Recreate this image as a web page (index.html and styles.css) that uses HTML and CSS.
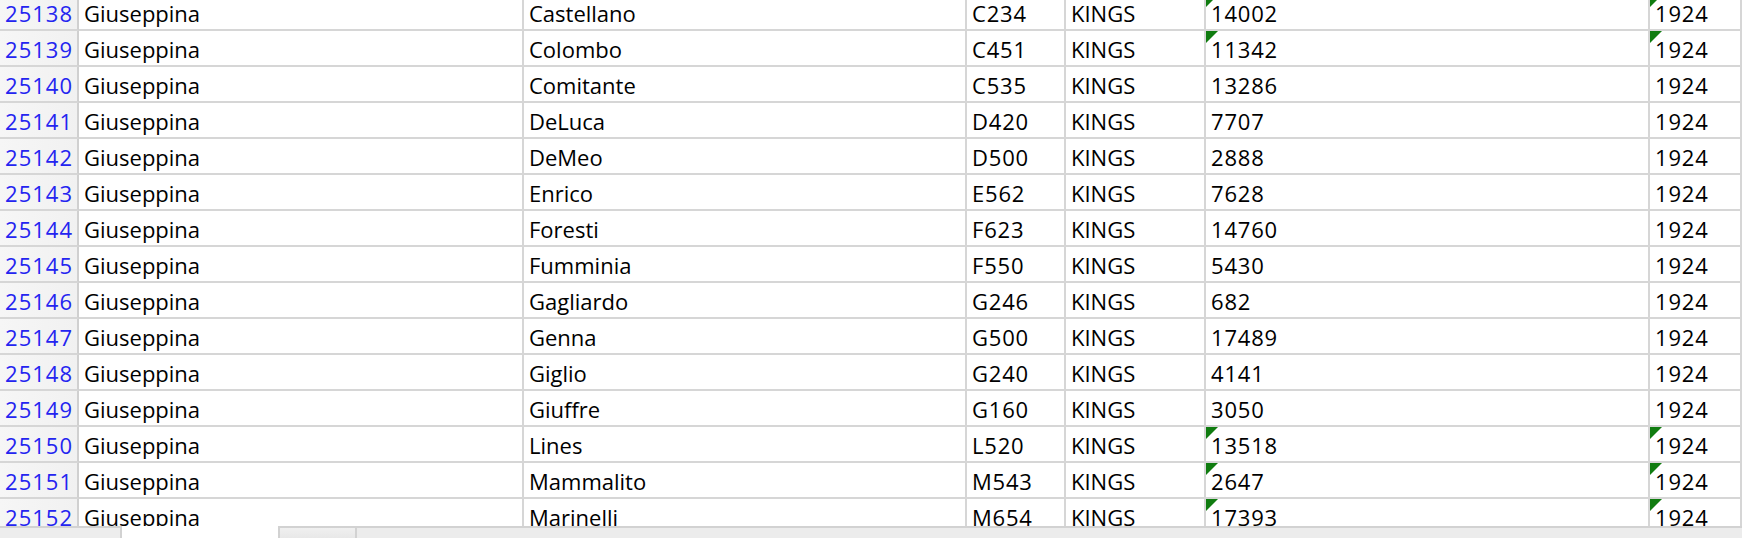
FILE: index.html
```html
<!DOCTYPE html>
<html>
<head>
<meta charset="utf-8">
<link rel="stylesheet" href="styles.css">
</head>
<body>
<div class="sheet">
  <div class="grid">
    <div class="row"><div class="hdr">25138</div><div class="cell">Giuseppina</div><div class="cell">Castellano</div><div class="cell">C234</div><div class="cell">KINGS</div><div class="cell flag">14002</div><div class="cell flag">1924</div></div>
    <div class="row"><div class="hdr">25139</div><div class="cell">Giuseppina</div><div class="cell">Colombo</div><div class="cell">C451</div><div class="cell">KINGS</div><div class="cell flag">11342</div><div class="cell flag">1924</div></div>
    <div class="row"><div class="hdr">25140</div><div class="cell">Giuseppina</div><div class="cell">Comitante</div><div class="cell">C535</div><div class="cell">KINGS</div><div class="cell">13286</div><div class="cell">1924</div></div>
    <div class="row"><div class="hdr">25141</div><div class="cell">Giuseppina</div><div class="cell">DeLuca</div><div class="cell">D420</div><div class="cell">KINGS</div><div class="cell">7707</div><div class="cell">1924</div></div>
    <div class="row"><div class="hdr">25142</div><div class="cell">Giuseppina</div><div class="cell">DeMeo</div><div class="cell">D500</div><div class="cell">KINGS</div><div class="cell">2888</div><div class="cell">1924</div></div>
    <div class="row"><div class="hdr">25143</div><div class="cell">Giuseppina</div><div class="cell">Enrico</div><div class="cell">E562</div><div class="cell">KINGS</div><div class="cell">7628</div><div class="cell">1924</div></div>
    <div class="row"><div class="hdr">25144</div><div class="cell">Giuseppina</div><div class="cell">Foresti</div><div class="cell">F623</div><div class="cell">KINGS</div><div class="cell">14760</div><div class="cell">1924</div></div>
    <div class="row"><div class="hdr">25145</div><div class="cell">Giuseppina</div><div class="cell">Fumminia</div><div class="cell">F550</div><div class="cell">KINGS</div><div class="cell">5430</div><div class="cell">1924</div></div>
    <div class="row"><div class="hdr">25146</div><div class="cell">Giuseppina</div><div class="cell">Gagliardo</div><div class="cell">G246</div><div class="cell">KINGS</div><div class="cell">682</div><div class="cell">1924</div></div>
    <div class="row"><div class="hdr">25147</div><div class="cell">Giuseppina</div><div class="cell">Genna</div><div class="cell">G500</div><div class="cell">KINGS</div><div class="cell">17489</div><div class="cell">1924</div></div>
    <div class="row"><div class="hdr">25148</div><div class="cell">Giuseppina</div><div class="cell">Giglio</div><div class="cell">G240</div><div class="cell">KINGS</div><div class="cell">4141</div><div class="cell">1924</div></div>
    <div class="row"><div class="hdr">25149</div><div class="cell">Giuseppina</div><div class="cell">Giuffre</div><div class="cell">G160</div><div class="cell">KINGS</div><div class="cell">3050</div><div class="cell">1924</div></div>
    <div class="row"><div class="hdr">25150</div><div class="cell">Giuseppina</div><div class="cell">Lines</div><div class="cell">L520</div><div class="cell">KINGS</div><div class="cell flag">13518</div><div class="cell flag">1924</div></div>
    <div class="row"><div class="hdr">25151</div><div class="cell">Giuseppina</div><div class="cell">Mammalito</div><div class="cell">M543</div><div class="cell">KINGS</div><div class="cell flag">2647</div><div class="cell flag">1924</div></div>
    <div class="row"><div class="hdr">25152</div><div class="cell">Giuseppina</div><div class="cell">Marinelli</div><div class="cell">M654</div><div class="cell">KINGS</div><div class="cell flag">17393</div><div class="cell flag">1924</div></div>
  </div>
  <div class="tabs">
    <div class="tab-lead"></div>
    <div class="tab active"></div>
    <div class="tab"></div>
    <div class="tab-rest"></div>
  </div>
</div>
</body>
</html>
```

FILE: styles.css
```css
html, body {
  margin: 0;
  padding: 0;
  background: #ffffff;
}

.sheet {
  width: 1742px;
  height: 538px;
  overflow: hidden;
  display: flex;
  flex-direction: column;
  font-family: "Open Sans", Lato, sans-serif;
  font-size: 22px;
  color: #000;
}

.grid {
  height: 526px;
  overflow: hidden;
  flex: none;
}

.row {
  display: grid;
  grid-template-columns: 79px 445px 443px 99px 140px 444px 1fr;
  height: 36px;
}

.row:first-child {
  margin-top: -5px;
}

.hdr, .cell {
  box-sizing: border-box;
  height: 36px;
  border-right: 2px solid #d6d6d6;
  border-bottom: 2px solid #d6d6d6;
  display: flex;
  align-items: flex-end;
  padding-bottom: 5px;
  line-height: 1;
  white-space: nowrap;
  overflow: hidden;
}

.hdr {
  justify-content: flex-end;
  padding-right: 4px;
  color: #2424f0;
  letter-spacing: 1px;
  background: linear-gradient(to right, #f6f6f6, #f1f1f1);
  border-right-color: #d0d0d0;
}

.cell {
  padding-left: 5px;
  position: relative;
}

.cell:nth-child(4),
.cell:nth-child(6),
.cell:nth-child(7) {
  letter-spacing: 0.8px;
}

.flag::before {
  content: "";
  position: absolute;
  left: 0;
  top: 0;
  width: 0;
  height: 0;
  border-top: 12px solid #107c10;
  border-right: 12px solid transparent;
}

.tabs {
  flex: 1;
  display: flex;
  background: #ececec;
  border-top: 2px solid #d2d2d2;
  box-sizing: border-box;
}

.tab-lead {
  width: 120px;
  border-right: 2px solid #d2d2d2;
  background: #ededed;
}

.tab {
  border-right: 2px solid #d2d2d2;
  background: linear-gradient(#f0f0f0, #e8e8e8);
}

.tab.active {
  width: 156px;
  background: #ffffff;
  margin-top: -2px;
}

.tab:not(.active) {
  width: 75px;
}

.tab-rest {
  flex: 1;
}
```
